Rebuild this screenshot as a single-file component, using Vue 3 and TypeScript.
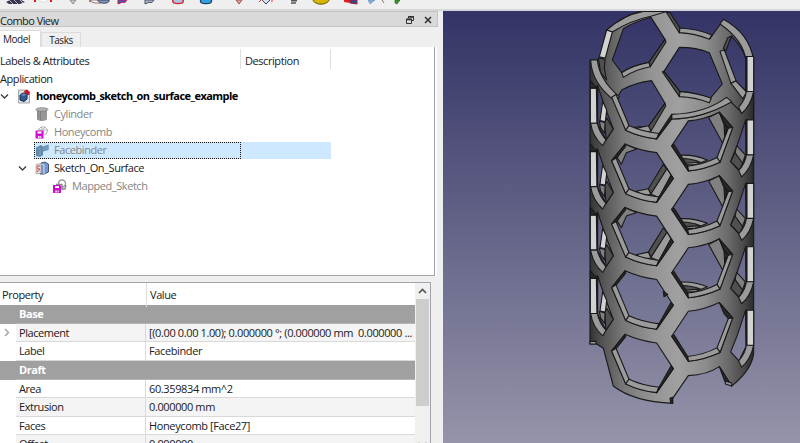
<script setup lang="ts">
interface TreeRow { label: string; icon: string; level: number; open?: boolean; tone: string }
interface PropRow { name: string; value: string; kind: string; expandable?: boolean }

const tree: TreeRow[] = [
  { label: 'honeycomb_sketch_on_surface_example', icon: 'doc', level: 0, open: true, tone: 'bold' },
  { label: 'Cylinder', icon: 'cylinder', level: 1, tone: 'dim' },
  { label: 'Honeycomb', icon: 'honeycomb', level: 1, tone: 'dim' },
  { label: 'Facebinder', icon: 'facebinder', level: 1, tone: 'dim selected' },
  { label: 'Sketch_On_Surface', icon: 'sos', level: 1, open: true, tone: 'normal' },
  { label: 'Mapped_Sketch', icon: 'mapped', level: 2, tone: 'dim' },
]

const props: PropRow[] = [
  { name: 'Base', value: '', kind: 'group' },
  { name: 'Placement', value: '[(0.00 0.00 1.00); 0.000000 °; (0.000000 mm\u00a0 0.000000 ...', kind: 'alt', expandable: true },
  { name: 'Label', value: 'Facebinder', kind: 'plain' },
  { name: 'Draft', value: '', kind: 'group' },
  { name: 'Area', value: '60.359834 mm^2', kind: 'plain' },
  { name: 'Extrusion', value: '0.000000 mm', kind: 'alt' },
  { name: 'Faces', value: 'Honeycomb [Face27]', kind: 'plain' },
  { name: 'Offset', value: '0.000000', kind: 'alt' },
]

// vertical repeat of the honeycomb cells, in model units
const pitch = 190.3
const shift = (k: number): string => `translate(0 ${k * pitch})`
// one backdrop gradient per cell row, so openings line up with the sky behind
const skies: { id: string; dy: number }[] = [
  { id: 'sky', dy: 0 },
  { id: 'sky-top', dy: -420 },
  ...[-2, -1, 0, 1, 2, 3].map((k) => ({ id: 'sky' + k, dy: k * pitch })),
]
const sky = (k: number): string => `url(#sky${k})`
</script>

<template>
  <div class="window">
    <div class="toolbar">
      <svg class="tools" width="800" height="9" viewBox="0 0 800 9">
        <path d="M6 2 10 0H21L25 2 20 4H9Z" fill="#35384f" /><path d="M9 0 13 4M14 0 18 4M20 0 23 3" stroke="#aab" />
        <path d="M35 0V2M51 0V2" stroke="#e01818" stroke-width="2" /><path d="M38 0Q43 4 48 0" fill="#fff" stroke="#ddd" />
        <path d="M70 0 73 4 76 0Z" fill="#ccc" stroke="#888" />
        <path d="M97 0H109Q110 3 104 3.300L98 2.500Z" fill="#7a93c4" stroke="#333" stroke-width=".8" /><path d="M89 1 92 0H97L100 3H95Z" fill="#fff" stroke="#733" stroke-width=".7" />
        <path d="M118 0V4L122 2.300 125 2.500 127 0Z" fill="#345fc0" stroke="#c3224b" />
        <path d="M145 0V4L149 2.300 152 2.500 154 0Z" fill="#a6b4d2" stroke="#556" />
        <ellipse cx="178" cy="1" rx="5.3" ry="2.600" fill="#a9c2df" stroke="#e0202f" stroke-width="1.4" />
        <ellipse cx="206" cy="1" rx="5.6" ry="2.600" fill="#35a0e0" stroke="#1c3f63" stroke-width="1.2" />
        <path d="M236 0 239 4 242 0Z" fill="#eba0a0" stroke="#955" />
        <path d="M262 0 266 4 270 0" fill="#dde" stroke="#446" /><path d="M259 2 261 0M272 0V2" stroke="#e33" />
        <path d="M291 .8H297M291 3H296" stroke="#555" stroke-width="1.5" />
        <ellipse cx="321" cy="-1.500" rx="8.5" ry="5.700" fill="#d8b600" stroke="#685700" />
        <path d="M344 0H350V3L344 2Z" fill="#df2028" /><path d="M350 0H357V4L350 3Z" fill="#204f95" stroke="#b01f35" />
        <path d="M368 0 370 4 375 0Z" fill="#86aee0" stroke="#58a" stroke-width=".5" /><path d="M382 0 384 3" stroke="#777" />
        <path d="M395 0V3L397 4 400 0Z" fill="#369b24" stroke="#22571c" stroke-width=".6" />
      </svg>
    </div>
    <div class="workspace">
      <aside class="panel">
        <div class="title">
          <span>Combo View</span>
          <svg width="30" height="11" viewBox="0 0 30 11">
            <path d="M2.500 1.500H7.500V5.500H5.500M2.500 1.500V3M.5 4H5.500V8.5H.5Z" fill="none" stroke="#333" /><path d="M2 2H8M0 4.5H6" stroke="#333" stroke-width="1.5" />
            <path d="M19 2 25 8M25 2 19 8" stroke="#333" stroke-width="1.6" />
          </svg>
        </div>
        <div class="tabs"><div class="tab active">Model</div><div class="tab">Tasks</div></div>
        <section class="tree">
          <div class="tree-head"><span class="c1">Labels &amp; Attributes</span><span class="c2">Description</span></div>
          <div class="app-row">Application</div>
          <div v-for="r in tree" :key="r.label" class="row" :class="[r.tone, 'lv' + r.level]">
            <svg v-if="r.open" class="chev" width="9" height="7" viewBox="0 0 9 7"><path d="M1 1.5 4.5 5 8 1.5" fill="none" stroke="#3c3c3c" stroke-width="1.3" /></svg>
            <div class="cell">
              <svg class="icon" width="15" height="15" viewBox="0 0 15 15">
                <g v-if="r.icon === 'doc'">
                  <path d="M1.5 1H9.500L12.5 4V14H1.5Z" fill="#dfe1e4" stroke="#a5a8ab" />
                  <path d="M7 2 10 .5 13 3 12 6 8 6Z" fill="#cf1520" /><path d="M3 6 6 4 10 5V10L7 12.500 3 11Z" fill="#315a91" stroke="#162f50" /><path d="M3.500 6 7 7 10 5 6 4.500Z" fill="#6385b5" />
                </g>
                <g v-else-if="r.icon === 'cylinder'">
                  <path d="M2 2.500V12.500Q7 15.500 12 12.500V2.500Z" fill="#979797" /><path d="M3 4V12.500M5.500 4V13.500" stroke="#808080" /><ellipse cx="7" cy="2.500" rx="6" ry="1.700" fill="#b8b8b8" stroke="#777" stroke-width=".8" />
                </g>
                <g v-else-if="r.icon === 'honeycomb'">
                  <path d="M3 5 6 2 10 2 13 5 11 9 9 10M6 2 8 5 13 5M8 5V9M3 5H8M10 2 8 5" fill="none" stroke="#b2b2b2" />
                  <path d="M.5 5.500H7.500L8.500 6.500V13.500H.5Z" fill="#cd0ecd" /><path d="M2.500 6.500H6.500V8.500H2.500ZM3 11H4.500V13H3ZM5.300 11H6.300V13H5.300Z" fill="#fff" />
                </g>
                <g v-else-if="r.icon === 'facebinder'">
                  <path d="M1 4.500 6 2 8 3.500 13.500 1.500V7L8 8.500V12L5 14 1 13Z" fill="#6289a9" /><path d="M8 4 13.500 2V6.500L8 8Z" fill="#7299b8" /><path d="M1 4.500 5 6V13.500" fill="none" stroke="#7ea3c0" />
                </g>
                <g v-else-if="r.icon === 'sos'">
                  <path d="M6 2 10 1 13.500 3V11L9 13H5Z" fill="#7497cf" stroke="#455776" /><path d="M6 3 9 4V13" fill="none" stroke="#d6dfef" />
                  <path d="M1 3.500 6 2.500V12L1 13Z" fill="#efdfdf" stroke="#999" stroke-width=".7" /><path d="M5 5Q2 4 2 6.500T4 8 3 10.500L1.500 10" fill="none" stroke="#dc3a3a" />
                </g>
                <g v-else>
                  <circle cx="10" cy="4.500" r="3.500" fill="none" stroke="#999" stroke-width="1.400" /><path d="M4 5.500H10V10H8M7 10H13L14 6" fill="none" stroke="#888" stroke-width="1.300" />
                  <path d="M1 6H8L9 7V14H1Z" fill="#cd0ecd" /><path d="M3 7H7V9H3ZM3.300 11.500H4.800V13.500H3.300ZM5.600 11.500H6.600V13.500H5.600Z" fill="#fff" />
                </g>
              </svg>
              <span class="label">{{ r.label }}</span>
            </div>
          </div>
        </section>
        <section class="props">
          <div class="grid">
            <div class="prop-head"><span>Property</span><span>Value</span></div>
            <div v-for="p in props" :key="p.name" class="prop" :class="p.kind">
              <div class="gutter"><svg v-if="p.expandable" width="6" height="9" viewBox="0 0 6 9"><path d="M1 1 4.500 4.500 1 8" fill="none" stroke="#999" stroke-width="1.200" /></svg></div>
              <div class="name">{{ p.name }}</div><div class="value">{{ p.value }}</div>
            </div>
          </div>
          <div class="scroll">
            <svg width="15" height="16" viewBox="0 0 15 16"><path d="M4 10 7.500 6.500 11 10" fill="none" stroke="#555" stroke-width="1.700" /></svg>
            <div class="thumb"></div>
            <svg class="down" width="15" height="2" viewBox="0 0 15 2"><path d="M4 .5 5 1.500M10 1.500 11 .5" stroke="#888" /></svg>
          </div>
        </section>
      </aside>
      <svg class="view" width="357" height="432" viewBox="443 11 357 432">
        <defs>
          <linearGradient v-for="s in skies" :id="s.id" :key="s.id" gradientUnits="userSpaceOnUse" x1="0" :y1="-387 - s.dy" x2="0" :y2="909 - s.dy"><stop offset="0" stop-color="#333366" /><stop offset="1" stop-color="#9494aa" /></linearGradient>
          <linearGradient id="metal" gradientUnits="userSpaceOnUse" x1="30" y1="0" x2="522" y2="0">
            <stop offset="0" stop-color="#333" /><stop offset=".07" stop-color="#515151" /><stop offset=".2" stop-color="#777" /><stop offset=".38" stop-color="#949494" /><stop offset=".54" stop-color="#a0a0a0" /><stop offset=".7" stop-color="#8d8d8d" /><stop offset=".84" stop-color="#6b6b6b" /><stop offset=".94" stop-color="#484848" /><stop offset="1" stop-color="#292929" />
          </linearGradient>
        </defs>
        <g transform="translate(580 140) scale(.33333)">
          <rect x="-411" y="-388" width="1073" height="1298" fill="url(#sky)" />
          <g class="edge">
            <g transform="translate(0 -420)">
              <path class="m" d="M80 90Q140 42 185 33L262 33 300 97Q350 98 390 116L430 60Q510 110 521 180V360H455L275 360 230 415 135 390 32 180H62Z" />
              <path class="l" d="M80 90Q130 45 190 34H262L215 48Q150 62 97 96Z" />
              <path class="w" d="M80 90 97 96 76 174 58 170Z" />
              <path class="d" d="M55 174 75 178 73 205 80 240 62 218Z" />
              <path fill="url(#sky-top)" d="M97 180 130 86Q165 65 213 52L255 118 207 187Q160 195 125 218Z" />
              <path class="l" d="M125 218Q160 195 207 187L211 200Q165 208 130 232Z" />
              <path class="d" d="M255 118 207 187 211 200 258 126Z" />
              <path class="d" d="M258 35 270 38 300 84 298 99Z" />
              <path class="l" d="M300 84Q350 86 395 105L388 118Q345 100 298 98Z" />
              <path fill="url(#sky-top)" d="M298 142Q350 142 388 158L427 252 390 296Q345 278 300 275L252 214Z" />
              <path class="d" d="M252 214 300 275 298 290 247 215Z" />
              <path class="l" d="M300 275Q350 278 394 295L388 308Q345 292 298 290Z" />
              <path fill="url(#sky-top)" d="M106 302 125 270Q165 248 215 242L255 310 205 380Q180 380 146 384Z" />
              <path class="d" d="M255 310 205 380 213 393 257 318Z" />
              <path class="l" d="M170 385 205 377 213 393 190 398Z" />
              <path fill="url(#sky-top)" d="M432 150 455 108Q492 150 499 181V265L490 278 460 245Z" />
              <path class="d" d="M430 145 443 113 455 108 437 153Z" />
              <path class="l" d="M420 154 433 150 468 242 453 250Z" /><path class="l" d="M453 250 468 243 500 276 488 296Z" />
              <path class="l" d="M430 58Q508 100 521 181H498Q490 120 420 72Z" />
            </g>
            <path class="m" d="M32 -240 106 -118 137 -30Q180 -8 230 -3L275 -63Q375 -65 450 -117L485 -82Q518 -115 521 -146V640Q515 690 455 738L418 680Q380 705 325 707L278 775V790Q160 785 100 738L70 625 50 612H30V-240Z" />
            <path class="l" d="M32 -240H52Q58 -180 118 -130L105 -117Q35 -170 32 -240Z" />
            <path class="l" d="M275 -77Q375 -80 440 -128L455 -115Q370 -65 275 -63Z" />

            <g v-for="k in [-1, 0, 1, 2]" :key="'sl' + k" :transform="shift(k)">
              <path :fill="sky(k)" d="M52 25 78 100 100 157 78 190 52 140Z" />
              <path class="w" d="M68 75 80 100 76 136 60 132Z" />
              <path class="d" d="M80 124 100 157 78 190 74 137Z" />
              <path class="g" d="M58 134 75 138 74 170 62 153Z" />
              <path class="w" d="M31 35H52V140H31Z" /><path class="k" d="M49 30H53V140H51Z" />
              <path class="l" d="M32 140H52Q58 168 78 190L68 207Q38 180 32 140Z" />
              <path class="k" d="M31 12 50 34H31Z" />
            </g>
            <g v-for="k in [-2, -1, 0, 1, 2]" :key="'sr' + k" :transform="shift(k)">
              <path v-if="k > -2" :fill="sky(k)" d="M497 130 472 205 452 255 477 282 500 235Z" />
              <g v-if="k > -2 && k < 2"><path class="g" d="M470 207 496 235 487 262 465 230Z" /><path class="d" d="M465 228 488 260 478 281 452 255Z" /></g>
              <path class="w" d="M499 130H521V236H499Z" /><path class="k" d="M497 130H501V235H498Z" />
              <path class="l" d="M499 235H521Q512 278 485 301L476 282Q496 260 499 235Z" />
            </g>
            <g v-for="k in [-1, 0, 1, 2, 3]" :key="'l' + k" :transform="shift(k)">
              <path v-if="k > -1" :fill="sky(k)" d="M135 12Q180 32 230 38L280 115 230 187Q180 182 137 160L95 62Z" />
              <g v-if="k > -1 && k < 2">
                <path class="g" d="M112 53 135 13 170 27 139 38 124 73Z" /><path class="d" d="M250 73 205 146 213 162 261 88Z" />
                <path class="l" d="M261 86 273 106 237 173 213 162Z" /><path class="l" d="M168 154 205 146 213 164 190 166Z" />
              </g>
              <path v-if="k > -1" class="k" d="M135 12 95 62 110 53 137 19Z" />
              <path class="l" d="M95 62 108 54 147 147 137 161Z" />
              <path class="l" d="M137 161 147 147Q185 165 237 171L230 187Q180 182 137 161Z" />
              <path class="k" :d="k === -1 ? 'M230 187 275 127 275 113 237 171Z' : 'M230 187 280 115 273 107 237 171Z'" />
            </g>
            <g v-for="k in [-1, 0, 1, 2]" :key="'r' + k" :transform="shift(k)">
              <path :fill="sky(k)" d="M325 133Q370 130 418 107L458 153 420 257Q370 280 325 283L275 208Z" />
              <g v-if="k < 2">
                <path class="g" d="M386 123 418 107 441 159 428 200Z" /><path class="k" d="M418 107 432 143 434 178 441 155Z" />
                <path class="l" d="M302 236Q345 234 382 250L345 265 318 265Z" /><path class="d" d="M306 246Q335 246 361 257L318 260Z" />
              </g>
              <path class="k" d="M418 107 458 153 445 155 432 140Z" />
              <path class="l" d="M458 153 445 155 411 243 420 257Z" />
              <path class="l" d="M322 269Q370 264 411 243L420 257Q370 280 325 283Z" />
              <path class="k" d="M275 208 282 204 323 269 325 283Z" />
            </g>
            <path class="k" d="M418 680 434 723 455 738Z" /><path class="l" d="M436 724 455 729 455 738 436 732Z" />
            <path class="l" d="M30 604H48V612H30Z" /><path class="k" d="M270 775 278 772V790L272 788Z" />
            <path class="k" d="M250 455 263 463 252 470Z" />
          </g>
        </g>
      </svg>
    </div>
  </div>
</template>

<style>
body { margin: 0; overflow: hidden; }
</style>
<style scoped>
.window { width: 800px; height: 443px; overflow: hidden; display: flex; flex-direction: column; background: #efefef; font: 11px/18px "Open Sans", "Noto Sans", sans-serif; letter-spacing: -.43px; color: #202020; }
.toolbar { height: 11px; flex: none; box-sizing: border-box; border-bottom: 2px solid #d5d8da; }
.tools { display: block; }
.workspace { display: flex; flex: 1; min-height: 0; }
.panel { width: 443px; display: flex; flex-direction: column; }
.view { display: block; flex: none; }
.edge path { stroke: #191919; stroke-width: 3.3; stroke-linejoin: round; }
.m { fill: url(#metal); }
.l { fill: #9b9b9b; }
.g { fill: #808080; }
.d { fill: #505050; }
.w { fill: #d2d2d2; }
.k { fill: #292929; }
.title { width: 438px; height: 16px; box-sizing: border-box; border: 1px solid #c4c4c4; border-left: 0; background: #d9d9d9; display: flex; justify-content: space-between; line-height: 17px; font-size: 11px; letter-spacing: -.55px; }
.title svg { margin: 3px 1px 0 0; }
.tabs { height: 20px; display: flex; align-items: flex-end; font-size: 10px; flex: none; }
.tab { width: 40px; height: 15px; line-height: 14px; box-sizing: border-box; text-align: center; border: 1px solid #dcdcdc; border-bottom: 0; white-space: nowrap; }
.tab.active { width: 41px; height: 17px; line-height: 17px; background: #fff; border-left: 0; padding-right: 7px; }
.tree { width: 434px; height: 228px; flex: none; background: #fff; border-right: 1px solid #a2a2ac; border-bottom: 1px solid #a2a2ac; box-shadow: 2px 0 0 #fff; }
.tree-head { height: 23px; display: flex; align-items: center; padding-top: 1px; box-sizing: border-box; }
.tree-head span { height: 20px; line-height: 23px; box-sizing: border-box; border-right: 1px solid #dedede; white-space: nowrap; }
.c1 { width: 241px; }
.c2 { width: 90px; padding-left: 4px; }
.app-row { height: 18px; line-height: 18px; }
.row { height: 17.85px; display: flex; align-items: center; position: relative; width: 331px; }
.chev { position: absolute; left: 0; }
.lv1 .chev { left: 18px; }
.cell { height: 17.85px; box-sizing: border-box; display: flex; align-items: center; white-space: nowrap; }
.icon { flex: none; margin-right: 4px; }
.label { line-height: 16px; margin-top: -1px; }
.lv0 .cell { margin-left: 17px; }
.lv1 .cell { margin-left: 35px; }
.lv2 .cell { margin-left: 52px; }
.lv2 .label { margin-left: 1px; }
.bold .label { font-weight: 700; color: #000; letter-spacing: -.54px; }
.dim .label { color: #858585; }
.selected { background: linear-gradient(to right, transparent 34px, #cde8ff 34px); }
.selected .cell { margin-left: 34px; width: 207px; border: 1px dotted #111; }
.props { flex: 1; margin-top: 6px; width: 431px; border-top: 1px solid #a2a2ac; border-right: 1px solid #a2a2ac; box-sizing: border-box; background: #fff; display: flex; min-height: 0; overflow: hidden; }
.grid { width: 416px; overflow: hidden; }
.prop-head { height: 22px; display: grid; grid-template-columns: 146px 1fr; line-height: 24px; }
.prop-head span { padding-left: 2px; }
.prop-head span + span { border-left: 1px solid #dedede; padding-left: 3px; }
.prop { height: 18.65px; display: grid; grid-template-columns: 16px 130px 1fr; line-height: 17.5px; white-space: nowrap; }
.gutter { display: flex; align-items: center; padding-left: 4px; }
.name { padding-left: 3px; border-right: 1px solid #d9d9d9; border-bottom: 1px solid #d9d9d9; }
.value { padding-left: 3px; border-bottom: 1px solid #d9d9d9; letter-spacing: -.38px; }
.alt .name, .alt .value { background: #f4f4f4; }
.group { background: #a0a0a0; color: #fff; font-weight: 700; }
.group .name, .group .value { border-color: #a0a0a0; border-bottom-color: #b4b4b4; }
.scroll { width: 15px; background: #f0f0f0; position: relative; height: 161px; }
.scroll svg { display: block; }
.thumb { height: 107px; margin: 0 1px; background: #cdcdcd; }
.scroll .down { position: absolute; bottom: 0; }
</style>
